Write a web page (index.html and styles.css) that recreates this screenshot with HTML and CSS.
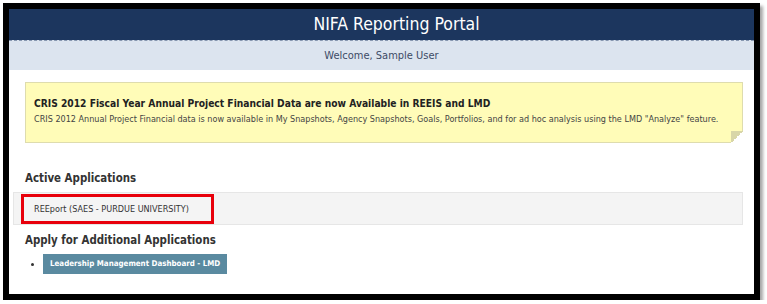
FILE: index.html
```html
<!DOCTYPE html>
<html lang="en">
<head>
    <meta charset="UTF-8">
    <title>NIFA Reporting Portal</title>
    <link rel="stylesheet" href="styles.css">
</head>
<body>
    <div class="frame">
        <div class="header">NIFA Reporting Portal</div>
        <div class="welcome">Welcome, Sample User</div>

        <div class="main">
            <div class="notice">
                <h3>CRIS 2012 Fiscal Year Annual Project Financial Data are now Available in REEIS and LMD</h3>
                <p>CRIS 2012 Annual Project Financial data is now available in My Snapshots, Agency Snapshots, Goals, Portfolios, and for ad hoc analysis using the LMD "Analyze" feature.</p>
            </div>

            <h2>Active Applications</h2>
            <div class="app-row">
                <a href="#" class="app-link">REEport (SAES - PURDUE UNIVERSITY)</a>
            </div>

            <h2>Apply for Additional Applications</h2>
            <ul class="apply-list">
                <li><a href="#" class="btn">Leadership Management Dashboard - LMD</a></li>
            </ul>
        </div>
    </div>
</body>
</html>
```

FILE: styles.css
```css
* {
    margin: 0;
    padding: 0;
    box-sizing: border-box;
}

body {
    font-family: "DejaVu Sans Condensed", "DejaVu Sans", sans-serif;
    background: #fff;
    color: #333;
}

.frame {
    width: 757px;
    height: 297px;
    margin: 3px 0 0 3px;
    border: 6px solid #000;
    background: #fff;
    box-shadow: 3px 3px 3px rgba(0, 0, 0, 0.35);
}

.header {
    height: 31px;
    line-height: 31px;
    padding-left: 30px;
    background: #1c365e;
    color: #fff;
    text-align: center;
    font-size: 17.5px;
}

.welcome {
    height: 30px;
    line-height: 29px;
    background: #dce4ef;
    border-top: 1px dashed #8797b0;
    color: #3c4b66;
    text-align: center;
    font-size: 11px;
}

.main {
    padding: 12px 11px 0 16px;
}

.notice {
    position: relative;
    height: 61px;
    padding: 15px 8px 0 8px;
    background: #fffcb8;
    border: 1px solid #dedcae;
}

.notice::after {
    content: "";
    position: absolute;
    right: -1px;
    bottom: -1px;
    width: 12px;
    height: 12px;
    background: linear-gradient(135deg, #d8d6a8 0%, #d8d6a8 50%, #fff 50%);
}

.notice h3 {
    font-size: 10.2px;
    font-weight: bold;
    color: #222;
    margin-bottom: 5px;
}

.notice p {
    font-size: 9px;
    color: #444;
    white-space: nowrap;
}

h2 {
    font-size: 11.4px;
    font-weight: bold;
    color: #333;
    margin: 28px 0 7px;
}

.app-row {
    height: 33px;
    margin-left: -12px;
    background: #f4f4f4;
    border: 1px solid #e6e6e6;
    display: flex;
    align-items: center;
}

.app-link {
    display: block;
    margin-left: 7px;
    width: 193px;
    height: 30px;
    line-height: 24px;
    padding-left: 10px;
    border: 3px solid #e8000b;
    font-size: 9px;
    color: #333;
    text-decoration: none;
}

.app-row + h2 {
    margin-top: 8px;
}

.apply-list {
    list-style: none;
    margin-top: 7px;
}

.apply-list li {
    display: flex;
    align-items: center;
    gap: 9px;
    padding-left: 6px;
}

.apply-list li::before {
    content: "";
    width: 3px;
    height: 3px;
    border-radius: 50%;
    background: #333;
}

.btn {
    display: inline-block;
    height: 20px;
    line-height: 20px;
    padding: 0 7px;
    background: #5a8aa0;
    color: #fff;
    font-size: 7.9px;
    font-weight: bold;
    text-decoration: none;
}
```
